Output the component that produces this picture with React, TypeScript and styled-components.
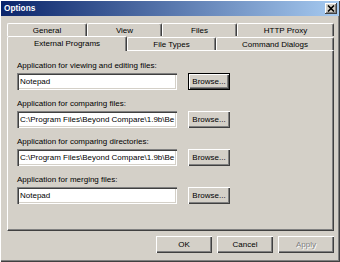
import React from "react";
import styled, { createGlobalStyle } from "styled-components";

const Global = createGlobalStyle`
  html, body { margin: 0; padding: 0; background: #d4d0c8; }
  body { font-family: "Liberation Sans", Arial, sans-serif; }
  * { box-sizing: border-box; }
`;

const Window = styled.div`
  width: 340px;
  height: 262px;
  padding: 1px;
  background: #d4d0c8;
  display: flex;
  flex-direction: column;
  box-shadow: inset 1px 1px #ffffff, inset -1px -1px #404040, inset -2px -2px #808080;
  font-family: "Liberation Sans", Arial, sans-serif;
  font-size: 8px;
  color: #000;
`;

const TitleBar = styled.div`
  height: 15px;
  display: flex;
  align-items: center;
  justify-content: space-between;
  padding: 0 2px 0 3px;
  background: linear-gradient(to right, #0a246a, #a6caf0);
`;

const Title = styled.span`
  color: #fff;
  font-weight: bold;
  font-size: 8.3px;
  line-height: 15px;
`;

const CloseBtn = styled.div`
  width: 12px;
  height: 11px;
  display: flex;
  align-items: center;
  justify-content: center;
  background: #d4d0c8;
  box-shadow: inset -1px -1px #404040, inset 1px 1px #ffffff, inset -2px -2px #808080;
`;

const Body = styled.div`
  flex: 1;
  display: flex;
  flex-direction: column;
  padding: 7px 5px 0 6px;
`;

const TabRow = styled.div<{ $front?: boolean }>`
  display: flex;
  align-items: flex-end;
  height: ${(p) => (p.$front ? 14 : 13)}px;
`;

const Tab = styled.div<{ $w: number; $selected?: boolean }>`
  width: ${(p) => p.$w}px;
  height: ${(p) => (p.$selected ? 15 : 13)}px;
  margin-bottom: ${(p) => (p.$selected ? -1 : 0)}px;
  position: ${(p) => (p.$selected ? "relative" : "static")};
  z-index: ${(p) => (p.$selected ? 1 : 0)};
  background: #d4d0c8;
  border-top: 1px solid #ffffff;
  border-left: 1px solid #ffffff;
  border-right: 1px solid #404040;
  border-radius: 2px 2px 0 0;
  box-shadow: inset -1px 0 #808080;
  display: flex;
  align-items: ${(p) => (p.$selected ? "flex-start" : "center")};
  padding-top: ${(p) => (p.$selected ? 1 : 0)}px;
  justify-content: center;
  font-size: 8px;
  line-height: 11px;
  white-space: nowrap;
`;

const Panel = styled.div`
  height: 181px;
  border-top: 1px solid #ffffff;
  border-left: 1px solid #ffffff;
  border-right: 1px solid #404040;
  border-bottom: 1px solid #404040;
  box-shadow: inset -1px -1px #808080;
  padding: 10px 9px 0 9px;
  display: flex;
  flex-direction: column;
  gap: 9px;
`;

const Field = styled.div`
  display: flex;
  flex-direction: column;
  gap: 2px;
`;

const Label = styled.div`
  height: 10px;
  line-height: 10px;
  font-size: 8px;
  white-space: nowrap;
`;

const InputRow = styled.div`
  display: flex;
  align-items: center;
  gap: 11px;
  height: 17px;
`;

const TextBox = styled.div`
  width: 160px;
  height: 17px;
  background: #fff;
  box-shadow: inset 1px 1px #808080, inset 2px 2px #404040, inset -1px -1px #ffffff, inset -2px -2px #d4d0c8;
  padding: 0 3px;
  font-size: 8px;
  line-height: 17px;
  white-space: nowrap;
  overflow: hidden;
`;

const Button = styled.div<{ $w: number; $default?: boolean; $disabled?: boolean }>`
  width: ${(p) => p.$w}px;
  height: 17px;
  background: #d4d0c8;
  display: flex;
  align-items: center;
  justify-content: center;
  font-size: 8px;
  color: ${(p) => (p.$disabled ? "#808080" : "#000")};
  text-shadow: ${(p) => (p.$disabled ? "1px 1px #ffffff" : "none")};
  box-shadow: ${(p) =>
    p.$default
      ? "inset 0 0 0 1px #000, inset 2px 2px #ffffff, inset -2px -2px #404040, inset -3px -3px #808080"
      : "inset 1px 1px #ffffff, inset -1px -1px #404040, inset -2px -2px #808080"};
`;

const Footer = styled.div`
  display: flex;
  justify-content: flex-end;
  gap: 5px;
  margin-top: 5px;
`;

const fields = [
  { label: "Application for viewing and editing files:", value: "Notepad", def: true },
  { label: "Application for comparing files:", value: "C:\\Program Files\\Beyond Compare\\1.9b\\Be" },
  { label: "Application for comparing directories:", value: "C:\\Program Files\\Beyond Compare\\1.9b\\Be" },
  { label: "Application for merging files:", value: "Notepad" },
];

export default function App() {
  return (
    <>
      <Global />
      <Window>
        <TitleBar>
          <Title>Options</Title>
          <CloseBtn>
            <svg width="8" height="7" viewBox="0 0 8 7">
              <path d="M1 0.5 L7 6.5 M7 0.5 L1 6.5" stroke="#000" strokeWidth="1.6" />
            </svg>
          </CloseBtn>
        </TitleBar>
        <Body>
          <TabRow>
            <Tab $w={80}>General</Tab>
            <Tab $w={75}>View</Tab>
            <Tab $w={75}>Files</Tab>
            <Tab $w={97}>HTTP Proxy</Tab>
          </TabRow>
          <TabRow $front>
            <Tab $w={120} $selected>External Programs</Tab>
            <Tab $w={89}>File Types</Tab>
            <Tab $w={118}>Command Dialogs</Tab>
          </TabRow>
          <Panel>
            {fields.map((f) => (
              <Field key={f.label}>
                <Label>{f.label}</Label>
                <InputRow>
                  <TextBox>{f.value}</TextBox>
                  <Button $w={42} $default={f.def}>Browse...</Button>
                </InputRow>
              </Field>
            ))}
          </Panel>
          <Footer>
            <Button $w={56}>OK</Button>
            <Button $w={56}>Cancel</Button>
            <Button $w={56} $disabled>Apply</Button>
          </Footer>
        </Body>
      </Window>
    </>
  );
}
